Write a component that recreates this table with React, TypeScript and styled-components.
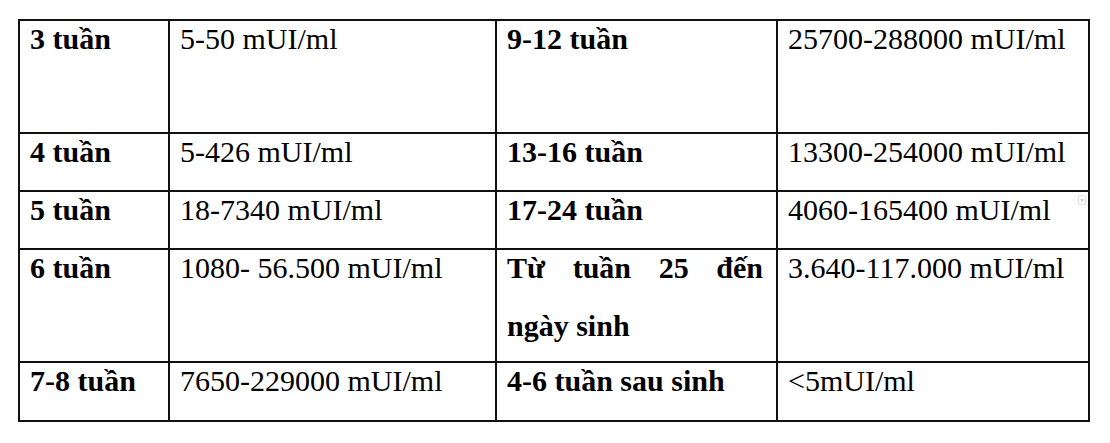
import styled, { createGlobalStyle } from "styled-components";

const GlobalStyle = createGlobalStyle`
  html, body {
    margin: 0;
    padding: 0;
    background: #ffffff;
  }
`;

const Page = styled.div`
  position: relative;
  width: 1110px;
  height: 443px;
  padding: 19px 0 0 18px;
  box-sizing: border-box;
  background: #ffffff;
  font-family: "Liberation Serif", "Times New Roman", serif;
  color: #000000;
`;

const Table = styled.table`
  width: 1070px;
  border-collapse: collapse;
  table-layout: fixed;
  border: 2px solid #111111;
`;

const Row = styled.tr<{ $h: number }>`
  height: ${(p) => p.$h}px;
`;

const Cell = styled.td<{ $bold?: boolean; $justify?: boolean }>`
  border: 2px solid #111111;
  padding: 0 13px 0 10px;
  vertical-align: top;
  font-size: 30px;
  line-height: 58px;
  font-weight: ${(p) => (p.$bold ? 700 : 400)};
  text-align: ${(p) => (p.$justify ? "justify" : "left")};
  white-space: ${(p) => (p.$justify ? "normal" : "nowrap")};
`;

const Text = styled.div`
  margin-top: -11px;
`;

const PasteMark = styled.div`
  position: absolute;
  left: 1078px;
  top: 195px;
  width: 8px;
  height: 10px;
  border: 1px solid #e4e4e4;
  box-sizing: border-box;
  display: flex;
  align-items: center;
  justify-content: center;

  &::after {
    content: "";
    border-left: 2px solid transparent;
    border-right: 2px solid transparent;
    border-top: 3px solid #c8c8c8;
  }
`;

type RowData = {
  h: number;
  week: string;
  value: string;
  week2: string;
  value2: string;
  justify?: boolean;
};

const rows: RowData[] = [
  { h: 113, week: "3 tuần", value: "5-50 mUI/ml", week2: "9-12 tuần", value2: "25700-288000 mUI/ml" },
  { h: 58, week: "4 tuần", value: "5-426 mUI/ml", week2: "13-16 tuần", value2: "13300-254000 mUI/ml" },
  { h: 58, week: "5 tuần", value: "18-7340 mUI/ml", week2: "17-24 tuần", value2: "4060-165400 mUI/ml" },
  {
    h: 113,
    week: "6 tuần",
    value: "1080- 56.500 mUI/ml",
    week2: "Từ tuần 25 đến ngày sinh",
    value2: "3.640-117.000 mUI/ml",
    justify: true,
  },
  { h: 59, week: "7-8 tuần", value: "7650-229000 mUI/ml", week2: "4-6 tuần sau sinh", value2: "<5mUI/ml" },
];

function App() {
  return (
    <Page>
      <GlobalStyle />
      <Table>
        <colgroup>
          <col style={{ width: 150 }} />
          <col style={{ width: 327 }} />
          <col style={{ width: 281 }} />
          <col style={{ width: 312 }} />
        </colgroup>
        <tbody>
          {rows.map((r, i) => (
            <Row key={i} $h={r.h}>
              <Cell $bold>
                <Text>{r.week}</Text>
              </Cell>
              <Cell>
                <Text>{r.value}</Text>
              </Cell>
              <Cell $bold $justify={r.justify}>
                <Text>{r.week2}</Text>
              </Cell>
              <Cell>
                <Text>{r.value2}</Text>
              </Cell>
            </Row>
          ))}
        </tbody>
      </Table>
      <PasteMark />
    </Page>
  );
}

export default App;
